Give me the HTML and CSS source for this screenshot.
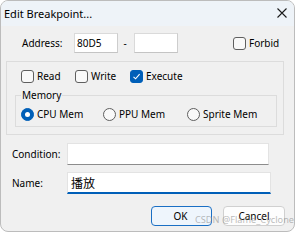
FILE: index.html
```html
<!DOCTYPE html>
<html lang="en">
<head>
    <meta charset="UTF-8">
    <title>Edit Breakpoint</title>
    <link rel="stylesheet" href="styles.css">
</head>
<body>
    <div class="window">
        <div class="titlebar">
            <span class="title">Edit Breakpoint...</span>
            <svg class="close" width="10" height="10" viewBox="0 0 10 10">
                <path d="M0.5 0.5L9.5 9.5M9.5 0.5L0.5 9.5" stroke="#1b1b1b" stroke-width="1.1" fill="none"/>
            </svg>
        </div>

        <div class="addr-row">
            <span class="addr-label">Address:</span>
            <input class="edit addr" type="text" value="80D5">
            <span class="dash">-</span>
            <input class="edit addr" type="text" value="">
            <label class="check forbid"><span class="box"></span>Forbid</label>
        </div>

        <div class="group">
            <div class="checks">
                <label class="check"><span class="box"></span>Read</label>
                <label class="check"><span class="box"></span>Write</label>
                <label class="check"><span class="box on">
                    <svg width="9" height="9" viewBox="0 0 9 9"><path d="M1.5 4.8L3.6 6.8L7.6 2.2" stroke="#fff" stroke-width="1.1" fill="none"/></svg>
                </span>Execute</label>
            </div>
            <fieldset class="memory">
                <legend>Memory</legend>
                <div class="radios">
                    <label class="check"><span class="radio on"></span>CPU Mem</label>
                    <label class="check"><span class="radio"></span>PPU Mem</label>
                    <label class="check"><span class="radio"></span>Sprite Mem</label>
                </div>
            </fieldset>
        </div>

        <div class="field-row">
            <span class="field-label">Condition:</span>
            <input class="edit cond" type="text" value="">
        </div>
        <div class="field-row name-row">
            <span class="field-label">Name:</span>
            <input class="edit name" type="text" value="播放">
        </div>

        <div class="buttons">
            <button class="btn default">OK</button>
            <button class="btn">Cancel</button>
        </div>

        <!-- watermark sits over the buttons -->
        <div class="watermark">CSDN @Flame_Cyclone</div>
    </div>
</body>
</html>
```

FILE: styles.css
```css
body {
    margin: 0;
    background-color: #fff;
    font-family: "Noto Sans", "Noto Sans CJK SC", sans-serif;
    font-size: 10px;
    color: #000;
}

.window {
    position: relative;
    width: 293px;
    height: 230px;
    border: 1px solid #bcbcbc;
    border-radius: 8px;
    background-color: #f0f0f0;
    overflow: hidden;
}

.titlebar {
    height: 25px;
    background-color: #eef3f8;
    display: flex;
    align-items: center;
    padding-left: 3px;
}

.title {
    font-size: 11px;
    line-height: 25px;
}

.close {
    margin-left: auto;
    margin-right: 7px;
    margin-bottom: 2px;
}

/* Address line */
.addr-row {
    display: flex;
    align-items: center;
    height: 20px;
    margin-top: 7px;
    padding-left: 21px;
}

.addr-label {
    width: 52px;
}

.edit {
    box-sizing: border-box;
    margin: 0;
    padding: 0 2px;
    font-family: "Noto Sans", "Noto Sans CJK SC", sans-serif;
    font-size: 10px;
    color: #000;
    background-color: #fff;
    border: 1px solid #d9d9d9;
    outline: none;
}

.addr {
    width: 44px;
    height: 20px;
    border-color: #dadada #cdcdcd #c4c4c4 #dadada;
}

.dash {
    width: 14px;
    margin-right: 2px;
    text-align: center;
}

.forbid {
    margin-left: 55px;
}

/* Checkboxes and radios */
.check {
    display: flex;
    align-items: center;
    gap: 3px;
    line-height: 16px;
}

.box {
    box-sizing: border-box;
    width: 13px;
    height: 13px;
    border: 1px solid #5f5f5f;
    border-radius: 3px;
    background-color: #f9f9f9;
    display: flex;
    align-items: center;
    justify-content: center;
}

.box.on {
    background-color: #005fb8;
    border-color: #005fb8;
}

.radio {
    box-sizing: border-box;
    width: 13px;
    height: 13px;
    border: 1px solid #5f5f5f;
    border-radius: 50%;
    background-color: #f9f9f9;
    display: flex;
    align-items: center;
    justify-content: center;
}

.radio.on {
    background-color: #005fb8;
    border-color: #005fb8;
}

.radio.on::after {
    content: "";
    width: 5px;
    height: 5px;
    border-radius: 50%;
    background-color: #fff;
}

.group {
    margin: 8px 0 0 5px;
    width: 276px;
    height: 72px;
    border: 1px solid #dcdcdc;
}

.checks {
    display: grid;
    grid-template-columns: 54px 55px auto;
    align-items: center;
    height: 16px;
    margin-top: 6px;
    padding-left: 14px;
}

.memory {
    box-sizing: border-box;
    width: 262px;
    margin: 5px 0 0 8px;
    padding: 0 0 4px 5px;
    border: 1px solid #dcdcdc;
}

.memory legend {
    padding: 0 1px;
    line-height: 12px;
}

.radios {
    display: grid;
    grid-template-columns: 82px 84px auto;
    align-items: center;
    height: 16px;
    margin-top: 5px;
}

/* Condition / Name */
.field-row {
    display: flex;
    align-items: center;
    padding-left: 11px;
    margin-top: 8px;
}

.name-row {
    margin-top: 7px;
}

.field-label {
    width: 55px;
}

.cond {
    width: 202px;
    height: 22px;
    border-color: #e3e3e3 #e3e3e3 #8c8c8c #e3e3e3;
}

.name {
    width: 204px;
    height: 22px;
    padding-left: 3px;
    font-size: 12px;
    border-color: #e3e3e3;
    border-bottom: 2px solid #005fb8;
}

/* Buttons */
.buttons {
    display: flex;
    justify-content: flex-end;
    gap: 11px;
    margin-top: 12px;
    padding-right: 9px;
}

.btn {
    box-sizing: border-box;
    height: 20px;
    width: 62px;
    padding: 0;
    font-family: "Noto Sans", sans-serif;
    font-size: 10px;
    color: #000;
    background-color: #fdfdfd;
    border: 1px solid #d0d0d0;
    border-radius: 4px;
}

.btn.default {
    width: 61px;
    padding-right: 2px;
    background-color: #eef5fc;
    border: 1px solid #1a6fc4;
}

.watermark {
    position: absolute;
    left: 194px;
    top: 212px;
    font-size: 9.2px;
    line-height: 14px;
    color: rgba(140, 140, 140, 0.6);
    white-space: nowrap;
}
```
